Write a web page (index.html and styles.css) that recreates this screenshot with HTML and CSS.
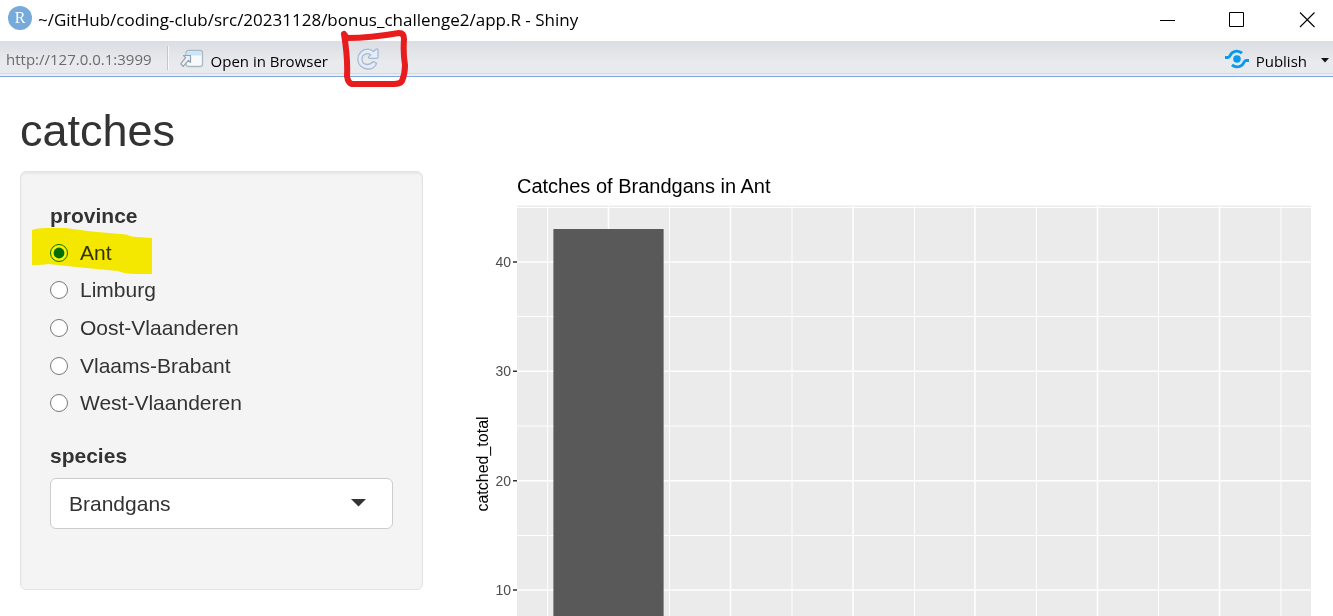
FILE: index.html
```html
<!DOCTYPE html>
<html lang="en">
<head>
<meta charset="utf-8">
<title>~/GitHub/coding-club/src/20231128/bonus_challenge2/app.R - Shiny</title>
<link rel="stylesheet" href="styles.css">
</head>
<body>
<div class="window">
  <header class="titlebar">
    <span class="app-icon">R</span>
    <span class="window-title">~/GitHub/coding-club/src/20231128/bonus_challenge2/app.R - Shiny</span>
    <div class="window-controls">
      <button class="window-button" type="button" aria-label="Minimize"><svg width="16" height="16" viewBox="0 0 16 16"><path d="M1 8.500H16" stroke="#000" fill="none"/></svg></button>
      <button class="window-button" type="button" aria-label="Maximize"><svg width="16" height="16" viewBox="0 0 16 16"><path d="M.5.500H14.500V14.500H.5Z" stroke="#000" fill="none"/></svg></button>
      <button class="window-button" type="button" aria-label="Close"><svg width="16" height="16" viewBox="0 0 16 16"><path d="M1 .5 15.500 15M15.500 .5 1 15" stroke="#000" stroke-width="1.100" fill="none"/></svg></button>
    </div>
  </header>

  <nav class="toolbar">
    <span class="url">http://127.0.0.1:3999</span>
    <span class="separator"></span>
    <button class="tool-button open-button" type="button">
      <svg width="24" height="20" viewBox="0 0 24 20">
        <rect x="6" y="1.500" width="16.500" height="16" rx="2.500" fill="#f7f9fb" stroke="#a9b9c4" stroke-width="1.300"/>
        <path d="M6.700 6.500V4Q6.700 2.200 8.500 2.200H20Q21.800 2.200 21.800 4V6.500Z" fill="#cbe5f8"/>
        <path d="M3.500 6.500H10.500V13.500L8.400 11.400 3.200 17.300.7 14.800 5.600 8.600Z" fill="#eef1f4" stroke="#94a5b0" stroke-width="1.200" stroke-linejoin="round"/>
      </svg>
      <span>Open in Browser</span>
    </button>
    <button class="tool-button reload-button" type="button" aria-label="Reload">
      <svg width="24" height="24" viewBox="0 0 24 24">
        <path d="M17.500 4.600 20 2.200Q21.700 1.200 22 3V10.500Q22 11.300 21 11.300H13.600Q12 11 12.900 9.600L14.700 7.700Q12.500 6.200 10 6.900C7 7.700 5.700 10 6 12.800C6.300 15.700 8.500 17.500 11.200 17.500C14.500 17.500 16.200 15.800 17.200 14.400L20.600 16.400C19 20 15.500 22.200 11.600 22C6 21.700 1.800 17.700 1.800 12.200C1.800 6.700 6 2.300 11.500 2.200C13.700 2.200 15.800 3.100 17.500 4.600Z" fill="#e4edf9" stroke="#a8bad0" stroke-width="1.300" stroke-linejoin="round"/>
      </svg>
      <svg class="reload-mark" width="68" height="60" viewBox="0 0 68 60" aria-hidden="true">
        <path d="M4 5 7 9Q30 9 59 4Q64 4 64 10Q63 25 65 36Q65 45 62 52Q60 55 54 55L12 55Q8 54 7 47Q8 30 4 5" fill="none" stroke="#e81c1c" stroke-width="6" stroke-linecap="round" stroke-linejoin="round"/>
      </svg>
    </button>
    <button class="tool-button publish-button" type="button">
      <svg width="24" height="20" viewBox="0 0 24 20">
        <circle cx="12" cy="10" r="3.800" fill="#0b9aeb"/>
        <path d="M0 8.500H3C5 8.500 5 5.500 7 3.900C10 1.500 14 1.500 17 4.200M7 15.800C10 18.500 14 18.500 17 16.100C19 14.500 19 11.500 21 11.500H24" fill="none" stroke="#0b9aeb" stroke-width="3"/>
      </svg>
      <span>Publish</span>
      <svg class="publish-caret" width="8" height="8" viewBox="0 0 8 8"><path d="M0 3H8L4 7.500Z" fill="#111"/></svg>
    </button>
  </nav>

  <main class="page">
    <h2 class="page-title">catches</h2>
    <div class="layout">
      <form class="well">
        <div class="control-label" id="province-label">province</div>
        <div class="radios" role="radiogroup" aria-labelledby="province-label">
          <label class="radio"><input type="radio" name="province" checked><span>Ant</span>
            <svg class="highlight" width="120" height="48" viewBox="0 0 120 48" aria-hidden="true"><path d="M0 2Q4 0 16 0H33L60 3.500 94 6.500Q100 9 105 9L120 10V46H104Q92 46 86 43L54 40 16 36Q10 37 0 37Z" fill="#fff200"/></svg>
          </label>
          <label class="radio"><input type="radio" name="province"><span>Limburg</span></label>
          <label class="radio"><input type="radio" name="province"><span>Oost-Vlaanderen</span></label>
          <label class="radio"><input type="radio" name="province"><span>Vlaams-Brabant</span></label>
          <label class="radio"><input type="radio" name="province"><span>West-Vlaanderen</span></label>
        </div>
        <label class="control-label" for="species">species</label>
        <div class="select-wrap">
          <select class="select" id="species"><option>Brandgans</option></select>
          <svg class="select-caret" width="15" height="8" viewBox="0 0 15 8"><path d="M0 0H15L7.500 7.500Z" fill="#333"/></svg>
        </div>
      </form>

      <svg class="plot" viewBox="0 0 850 445" role="img" aria-label="Catches of Brandgans in Ant">
        <text class="plot-title" x="54" y="22">Catches of Brandgans in Ant</text>
        <rect x="54" y="34.500" width="794" height="411" fill="#ebebeb"/>
        <path class="grid-minor" d="M54 36.500H848M54 145.500H848M54 255H848M54 364.500H848M84.500 35V445M206.500 35V445M329 35V445M451.500 35V445M573.500 35V445M695.500 35V445M818 35V445"/>
        <path class="grid-major" d="M54 91H848M54 200.300H848M54 309.700H848M54 419H848M145.500 35V445M267.500 35V445M390 35V445M512 35V445M634.500 35V445M756.500 35V445"/>
        <rect x="90.400" y="58" width="110.200" height="387" fill="#595959"/>
        <path class="ticks" d="M50 91H54M50 200.300H54M50 309.700H54M50 419H54"/>
        <g class="tick-labels">
          <text x="48" y="96">40</text>
          <text x="48" y="205">30</text>
          <text x="48" y="315">20</text>
          <text x="48" y="424">10</text>
        </g>
        <text class="axis-title" transform="translate(25 293) rotate(-90)">catched_total</text>
      </svg>
    </div>
  </main>
</div>
</body>
</html>
```
FILE: styles.css
```css
* {
  box-sizing: border-box;
}

body {
  margin: 0;
  background: #fff;
  color: #333;
  font-family: "Liberation Sans", Arial, sans-serif;
  font-size: 21px;
  line-height: 30px;
}

button {
  padding: 0;
  border: 0;
  background: none;
  font: inherit;
  color: inherit;
}

svg {
  display: block;
  flex: none;
}

.window {
  height: 100vh;
  overflow: hidden;
}

.titlebar,
.toolbar {
  display: flex;
  align-items: center;
  font-family: "Open Sans", "Noto Sans", sans-serif;
  color: #000;
}

.titlebar {
  height: 41px;
  padding: 0 18px 2px 8px;
  gap: 6px;
  font-size: 17px;
}

.app-icon {
  width: 24px;
  height: 24px;
  margin-bottom: 3px;
  border-radius: 50%;
  background: #75aadb;
  color: #fff;
  font-family: "Liberation Serif", serif;
  font-size: 16px;
  line-height: 24px;
  text-align: center;
}

.window-title {
  white-space: nowrap;
}

.window-controls {
  display: flex;
  gap: 54px;
  margin-left: auto;
}

.window-button {
  height: 16px;
}

.toolbar {
  height: 36px;
  padding: 0 4px 0 6px;
  border-bottom: 1px solid #7da7dd;
  background: linear-gradient(#dcdde2, #e9eaee 60%, #e9eaee 32px, #d6d9de 32px, #d6d9de 33px, #eceef1 33px);
  font-size: 15px;
}

.url {
  color: #6b6b6b;
}

.separator {
  width: 2px;
  height: 24px;
  margin: 0 11px 2px 15px;
  border-left: 1px solid #c3c5c9;
  border-right: 1px solid #f8f8f9;
}

.tool-button {
  display: flex;
  align-items: center;
  gap: 7px;
  height: 36px;
}

.tool-button span {
  padding-top: 4px;
}

.reload-button {
  position: relative;
  margin-left: 28px;
}

.reload-mark {
  position: absolute;
  top: -12px;
  left: -16px;
}

.publish-button {
  margin-left: auto;
}

.publish-caret {
  margin-left: 7px;
}

.page {
  padding: 29px 20px 0;
}

.page-title {
  margin: 0 0 15px;
  font-size: 45px;
  font-weight: 400;
  line-height: 50px;
}

.layout {
  display: grid;
  grid-template-columns: minmax(0, 403fr) minmax(0, 850fr);
  gap: 40px;
  align-items: start;
}

.well {
  padding: 29px 29px 60px;
  border: 1px solid #e3e3e3;
  border-radius: 6px;
  background: #f4f4f4;
  box-shadow: inset 0 2px 2px rgba(0, 0, 0, 0.05);
}

.control-label {
  display: block;
  font-weight: 700;
}

.radios {
  display: grid;
  grid-auto-rows: 1fr;
  height: 188px;
  margin: 3px 0 19px;
}

.radio {
  position: relative;
  display: flex;
  align-items: center;
  gap: 12px;
}

.radio input {
  width: 18px;
  height: 18px;
  margin: 0;
}

.highlight {
  position: absolute;
  top: -6px;
  left: -18px;
  mix-blend-mode: multiply;
  pointer-events: none;
}

.select-wrap {
  position: relative;
  margin-top: 7px;
}

.select {
  display: block;
  width: 100%;
  height: 51px;
  padding: 0 18px;
  border: 1px solid #ccc;
  border-radius: 6px;
  background: #fff;
  color: #333;
  font: inherit;
  appearance: none;
}

.select-caret {
  position: absolute;
  top: 21px;
  right: 27px;
  pointer-events: none;
}

.plot {
  width: 100%;
  height: auto;
  font-family: "Liberation Sans", Arial, sans-serif;
}

.plot-title {
  font-size: 20px;
  fill: #000;
}

.axis-title {
  font-size: 16px;
  fill: #000;
  text-anchor: middle;
}

.tick-labels {
  font-size: 14px;
  fill: #4d4d4d;
  text-anchor: end;
}

.grid-minor {
  stroke: #fff;
  stroke-width: 1;
}

.grid-major {
  stroke: #fff;
  stroke-width: 1.500;
}

.ticks {
  stroke: #333;
  stroke-width: 1.500;
}
```
